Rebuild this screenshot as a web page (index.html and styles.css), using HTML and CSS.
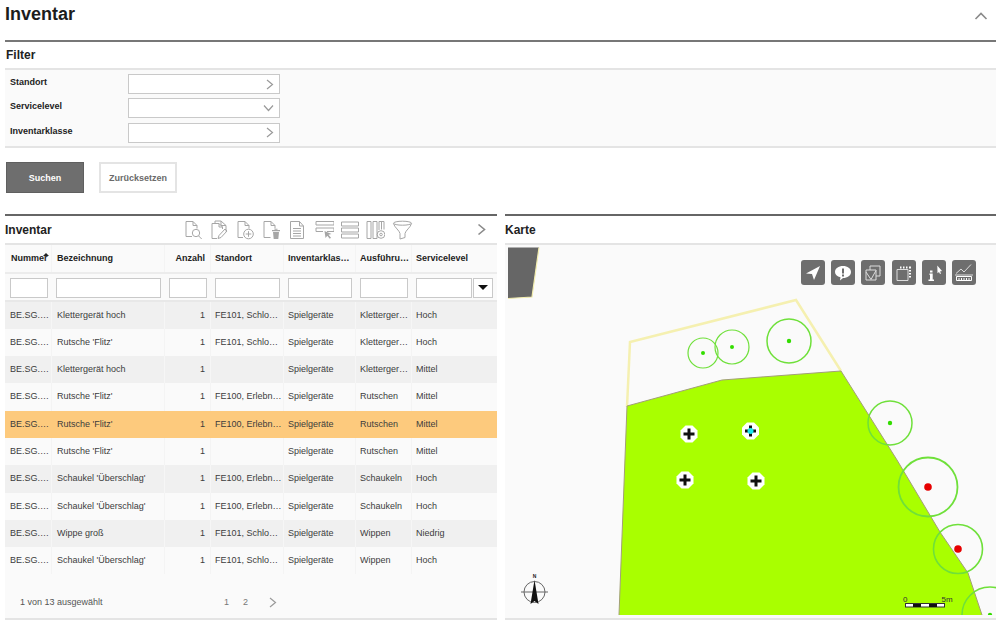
FILE: index.html
```html
<!DOCTYPE html>
<html lang="de">
<head>
<meta charset="utf-8">
<title>Inventar</title>
<link rel="stylesheet" href="styles.css">
</head>
<body>
<div class="page">
  <header class="title-bar">
    <h1>Inventar</h1>
    <svg class="collapse" width="14" height="8" viewBox="0 0 14 8"><path d="M1.5 7 7 1.5 12.5 7" /></svg>
  </header>

  <section class="filter">
    <h2 class="filter-title">Filter</h2>
    <div class="filter-body">
      <div class="filter-row"><label>Standort</label><div class="field"><svg width="8" height="11" viewBox="0 0 8 11"><path d="M1 1l5.5 4.5L1 10"/></svg></div></div>
      <div class="filter-row"><label>Servicelevel</label><div class="field"><svg width="11" height="8" viewBox="0 0 11 8"><path d="M1 1.500l4.500 5 4.500-5"/></svg></div></div>
      <div class="filter-row"><label>Inventarklasse</label><div class="field"><svg width="8" height="11" viewBox="0 0 8 11"><path d="M1 1l5.5 4.5L1 10"/></svg></div></div>
    </div>
    <div class="actions">
      <button class="btn btn-primary">Suchen</button>
      <button class="btn btn-secondary">Zurücksetzen</button>
    </div>
  </section>

  <div class="panels">
    <section class="panel panel-left">
      <div class="panel-head">
        <h2>Inventar</h2>
        <div class="tools">
          <svg width="19" height="20" viewBox="0 0 19 20"><path d="M8 16.500H2V1.500h7l4 4v3M9 1.500v4h4"/><circle cx="12" cy="13" r="3.700"/><path d="M14.500 15.800l3.200 3.200"/></svg>
          <svg width="19" height="20" viewBox="0 0 19 20"><path d="M5 3.500V1h6l5 4.500v6M11 1v4.500h5M7 18.500H2V3.500h7l3.500 3.500v2M9 3.500V7h3.500"/><path d="M8 18.500l1-3 6-6.500 2 2-6 6.500z"/></svg>
          <svg width="19" height="20" viewBox="0 0 19 20"><path d="M7 17.500H2V1.500h7l4 4v3M9 1.500v4h4"/><circle cx="12.500" cy="14" r="4.800"/><path d="M12.500 11.200v5.600M9.700 14h5.600"/></svg>
          <svg width="20" height="20" viewBox="0 0 20 20"><path d="M8.500 17.500H2V1.500h7l4 4v3M9 1.500v4h4"/><path class="solid" d="M10 10h8v1.200h-8zM12.500 8.800h3v1h-3zM11 12h6l-.7 7h-4.600z"/></svg>
          <svg width="19" height="20" viewBox="0 0 19 20"><path d="M1.500 18.500V1.500h9l4 4.500v12.500zM10.500 1.500V6h4M4 8.500h8M4 11h8M4 13.500h8M4 16h8"/></svg>
          <svg width="19" height="20" viewBox="0 0 19 20"><path d="M1 1.500h18v3.500H1zM1 8h18v3.500h-7M8 11.500H1V8"/><path class="solid" d="M9.500 11l7 3-3 .8 2.500 3-1.200 1-2.500-3-1.800 2.200z"/></svg>
          <svg width="18" height="20" viewBox="0 0 18 20"><path d="M.5 2h17v4H.5zM.5 8h17v4H.5zM.5 14h17v4H.5z"/></svg>
          <svg width="19" height="20" viewBox="0 0 19 20"><path d="M1 1.500h4v17H1zM7 1.500h4v17H7zM13 10V1.500h5v8M15.500 1.500v8"/><circle cx="15" cy="14.500" r="3.800"/><circle cx="15" cy="14.500" r="1.300"/></svg>
          <svg width="21" height="20" viewBox="0 0 21 20"><ellipse cx="10.500" cy="3.200" rx="9" ry="2"/><path d="M1.500 3.500c1 4 6 7 6.500 10v5.500l5-1.500v-4c.5-3 5.500-6 6.500-10"/></svg>
        </div>
        <svg class="panel-arrow" width="9" height="13" viewBox="0 0 9 13"><path d="M1.500 1.500l6 5-6 5"/></svg>
      </div>

      <div class="grid">
        <div class="row head">
          <div class="c sorted">Nummer</div><div class="c">Bezeichnung</div><div class="c num">Anzahl</div><div class="c">Standort</div><div class="c">Inventarklassen</div><div class="c">Ausführung</div><div class="c">Servicelevel</div>
        </div>
        <div class="row filters">
          <div class="c"><input></div><div class="c"><input></div><div class="c"><input></div><div class="c"><input></div><div class="c"><input></div><div class="c"><input></div>
          <div class="c with-btn"><input><span class="drop"></span></div>
        </div>
        <div class="row odd"><div class="c">BE.SG.001</div><div class="c">Klettergerät hoch</div><div class="c num">1</div><div class="c">FE101, Schlosspark</div><div class="c">Spielgeräte</div><div class="c">Klettergeräte</div><div class="c">Hoch</div></div>
        <div class="row even"><div class="c">BE.SG.002</div><div class="c">Rutsche 'Flitz'</div><div class="c num">1</div><div class="c">FE101, Schlosspark</div><div class="c">Spielgeräte</div><div class="c">Klettergeräte</div><div class="c">Hoch</div></div>
        <div class="row odd"><div class="c">BE.SG.003</div><div class="c">Klettergerät hoch</div><div class="c num">1</div><div class="c"></div><div class="c">Spielgeräte</div><div class="c">Klettergeräte</div><div class="c">Mittel</div></div>
        <div class="row even"><div class="c">BE.SG.004</div><div class="c">Rutsche 'Flitz'</div><div class="c num">1</div><div class="c">FE100, Erlebnispark</div><div class="c">Spielgeräte</div><div class="c">Rutschen</div><div class="c">Mittel</div></div>
        <div class="row selected"><div class="c">BE.SG.005</div><div class="c">Rutsche 'Flitz'</div><div class="c num">1</div><div class="c">FE100, Erlebnispark</div><div class="c">Spielgeräte</div><div class="c">Rutschen</div><div class="c">Mittel</div></div>
        <div class="row even"><div class="c">BE.SG.006</div><div class="c">Rutsche 'Flitz'</div><div class="c num">1</div><div class="c"></div><div class="c">Spielgeräte</div><div class="c">Rutschen</div><div class="c">Mittel</div></div>
        <div class="row odd"><div class="c">BE.SG.007</div><div class="c">Schaukel 'Überschlag'</div><div class="c num">1</div><div class="c">FE100, Erlebnispark</div><div class="c">Spielgeräte</div><div class="c">Schaukeln</div><div class="c">Hoch</div></div>
        <div class="row even"><div class="c">BE.SG.008</div><div class="c">Schaukel 'Überschlag'</div><div class="c num">1</div><div class="c">FE100, Erlebnispark</div><div class="c">Spielgeräte</div><div class="c">Schaukeln</div><div class="c">Hoch</div></div>
        <div class="row odd"><div class="c">BE.SG.009</div><div class="c">Wippe groß</div><div class="c num">1</div><div class="c">FE101, Schlosspark</div><div class="c">Spielgeräte</div><div class="c">Wippen</div><div class="c">Niedrig</div></div>
        <div class="row even"><div class="c">BE.SG.010</div><div class="c">Schaukel 'Überschlag'</div><div class="c num">1</div><div class="c">FE101, Schlosspark</div><div class="c">Spielgeräte</div><div class="c">Wippen</div><div class="c">Hoch</div></div>
      </div>

      <footer class="pager">
        <span class="count">1 von 13 ausgewählt</span>
        <span class="pages"><span>1</span><span class="p2">2</span>
          <svg width="8" height="11" viewBox="0 0 8 11"><path d="M1 1l5.500 4.500L1 10"/></svg></span>
      </footer>
    </section>

    <section class="panel panel-right">
      <div class="panel-head"><h2>Karte</h2></div>
      <div class="map">
        <svg class="map-svg" width="491" height="370" viewBox="505 245 491 370">
          <path d="M508 247.500H539L532 297 508 298.500Z" fill="#666" />
          <path d="M539 247.500 532 297 508 298.500" fill="none" stroke="#f3eeae" stroke-width="1.200"/>
          <path d="M627 407 630 342 796 300 841 371" fill="none" stroke="#f5f0b0" stroke-width="2.500"/>
          <path d="M627 406 722 380 841 371 897 460 940 532 968 573 982 615H619Z" fill="#a9ff00"/>
          <path d="M619 615 627 406 722 380 841 371 897 460 940 532 968 573 982 615" fill="none" stroke="#a29f78" stroke-width="1"/>
          <g fill="none" stroke="#6fe03a">
            <circle cx="703" cy="353" r="15" stroke-width="1.200"/>
            <circle cx="732" cy="347" r="17" stroke-width="1.200"/>
            <circle cx="789" cy="341" r="22" stroke-width="1.500"/>
            <circle cx="890" cy="423" r="22" stroke-width="1.500"/>
            <circle cx="928" cy="487" r="29.500" stroke-width="1.800"/>
            <circle cx="958" cy="549" r="24.500" stroke-width="1.600"/>
            <circle cx="990" cy="615" r="28" stroke-width="1.600"/>
          </g>
          <g fill="#33dd00">
            <circle cx="703" cy="353" r="2"/><circle cx="732" cy="347" r="2"/><circle cx="789" cy="341" r="2.200"/><circle cx="890" cy="423" r="2.200"/><circle cx="990" cy="615" r="2.200"/>
          </g>
          <g fill="#e60000"><circle cx="928" cy="487" r="3.800"/><circle cx="958" cy="549" r="3.800"/></g>
          <g>
            <g transform="translate(689 434)"><path d="M-3.500-8.500h7l5 5v7l-5 5h-7l-5-5v-7z" fill="#fff"/><path d="M-1.500-5.500h3v4h4v3h-4v4h-3v-4h-4v-3h4z" fill="#111"/></g>
            <g transform="translate(750.500 431)"><path d="M-3.500-8.500h7l5 5v7l-5 5h-7l-5-5v-7z" fill="#fff"/><path d="M-1.500-5.500h3v4h4v3h-4v4h-3v-4h-4v-3h4z" fill="#111"/><circle cy="0" r="3" fill="#18e6ee"/></g>
            <g transform="translate(685 480)"><path d="M-3.500-8.500h7l5 5v7l-5 5h-7l-5-5v-7z" fill="#fff"/><path d="M-1.500-5.500h3v4h4v3h-4v4h-3v-4h-4v-3h4z" fill="#111"/></g>
            <g transform="translate(756 481)"><path d="M-3.500-8.500h7l5 5v7l-5 5h-7l-5-5v-7z" fill="#fff"/><path d="M-1.500-5.500h3v4h4v3h-4v4h-3v-4h-4v-3h4z" fill="#111"/></g>
          </g>
          <g>
            <circle cx="534.500" cy="592" r="10.500" fill="none" stroke="#666" stroke-width="1"/>
            <path d="M521 592h27" stroke="#666" stroke-width="1"/>
            <path d="M534.500 580 538.500 604 534.500 601 530.500 604Z" fill="#111"/>
            <text x="534.500" y="578" class="north">N</text>
          </g>
          <g>
            <rect x="905.500" y="603.500" width="39" height="3.500" fill="#fff" stroke="#333" stroke-width="1"/>
            <rect x="913" y="604" width="8" height="3" fill="#111"/><rect x="929" y="604" width="8" height="3" fill="#111"/>
            <text x="903" y="602" class="scale">0</text><text x="941.500" y="602" class="scale">5m</text>
          </g>
        </svg>
        <div class="map-tools">
          <span class="mt"><svg width="16" height="16" viewBox="0 0 16 16"><path d="M15 1 1 8.500l6 .5 2 6z" fill="#fff"/></svg></span>
          <span class="mt"><svg width="18" height="18" viewBox="0 0 18 18"><path d="M9 2c4.500 0 8 2.500 8 6s-3.500 6-8 6l-3 2.500.5-3.200C3 12.300 1 10.500 1 8c0-3.500 3.500-6 8-6z" fill="#fff"/><path d="M8 4.500h2V9.500H8zM8 10.500h2v2H8z" fill="#6e6e6e"/></svg></span>
          <span class="mt"><svg width="18" height="18" viewBox="0 0 18 18" class="line"><path d="M6 6V2h10v10h-4M2 6h10v10H2zM2 8l5 7.500 5-9"/></svg></span>
          <span class="mt"><svg width="18" height="18" viewBox="0 0 18 18" class="line"><path d="M2 5.500h11v11H2z"/><path class="dots" d="M5 3.500h1.500M8 3.500h1.500M11 3.500h1.500M14 3.500h2M15 6v1.500M15 9v1.500M15 12v1.500"/></svg></span>
          <span class="mt"><svg width="18" height="18" viewBox="0 0 18 18"><path d="M5 6.500h2.500v2H5zM4.500 9.500h3.200v6H9V17H3.500v-1.500h1.500v-4.500h-.5z" fill="#fff"/><path d="M12.300 1.500 17 7l-2 .4 1 2.200-1 .5-1-2.200-1.500 1.400z" fill="#fff"/></svg></span>
          <span class="mt"><svg width="20" height="18" viewBox="0 0 20 18" class="line"><path d="M2 9.500l5-4.500 3 3 7-7.500M1 11h18"/><path class="ruler" d="M2.500 12.500h15v4h-15zM5 14v2.500M7.500 14v2.500M10 14v2.500M12.500 14v2.500M15 14v2.500"/></svg></span>
        </div>
      </div>
    </section>
  </div>
</div>
</body>
</html>
```
FILE: styles.css
```css
* { box-sizing: border-box; }
html, body { margin: 0; padding: 0; background: #fff; }
body { font-family: "Liberation Sans", Arial, sans-serif; color: #222; overflow: hidden; }
.page { width: 1000px; height: 622px; padding: 0 4px 0 5px; }

.title-bar { height: 40px; padding-bottom: 12px; display: flex; align-items: center; justify-content: space-between; }
h1 { margin: 0; font-size: 18px; font-weight: 700; color: #1c1c1c; }
.collapse { margin-right: 8px; margin-top: 4px; }
.collapse path { fill: none; stroke: #8a8a8a; stroke-width: 1.6; }

.filter { border-top: 2px solid #777; height: 174px; }
.filter-title { margin: 0; height: 26px; font-size: 12px; font-weight: 700; line-height: 26px; padding-left: 1px; color: #222; }
.filter-body { background: #fafafa; border-top: 2px solid #e4e4e4; border-bottom: 2px solid #e4e4e4; height: 80px; padding-top: 4px; display: flex; flex-direction: column; gap: 4.3px; }
.filter-row { display: flex; height: 20px; }
.filter-row label { width: 123px; padding-left: 5px; font-size: 9px; font-weight: 700; line-height: 16px; color: #222; }
.field { width: 152px; height: 20px; background: #fff; border: 1px solid #c9c9c9; display: flex; align-items: center; justify-content: flex-end; padding-right: 5px; }
.field path, .pages path { fill: none; stroke: #9a9a9a; stroke-width: 1.2; }
.actions { display: flex; gap: 15px; padding: 14px 0 0 1px; }
.btn { height: 31px; width: 78px; font: 700 9px "Liberation Sans", Arial, sans-serif; padding: 0; }
.btn-primary { background: #6e6e6e; border: 1px solid #5f5f5f; color: #fff; }
.btn-secondary { background: #fff; border: 2px solid #e4e4e4; color: #6a6a6a; }

.panels { display: flex; justify-content: space-between; }
.panel { border-top: 2px solid #666; height: 406px; }
.panel-left { width: 492px; }
.panel-right { width: 491px; }
.panel-head { height: 29px; border-bottom: 2px solid #e4e4e4; display: flex; align-items: center; position: relative; }
.panel-head h2 { margin: 0; font-size: 12px; font-weight: 700; color: #222; }
.panel-left .panel-head h2 { width: 179px; }
.tools { display: flex; gap: 7px; align-items: center; }
.tools path, .tools circle, .tools ellipse { fill: none; stroke: #a6a6a6; stroke-width: 1; }
.tools path.solid { fill: #a6a6a6; stroke: none; }
.panel-arrow { margin-left: auto; margin-right: 11px; }
.panel-arrow path { fill: none; stroke: #8a8a8a; stroke-width: 1.6; }

.grid { display: flex; flex-direction: column; background: #fafafa; }
.row { display: grid; grid-template-columns: 47px 113px 46px 73px 72px 56px 85px; height: 27.3px; font-size: 9px; color: #3c3c3c; }
.c { padding: 0 1px 0 5px; line-height: 27px; white-space: nowrap; overflow: hidden; text-overflow: ellipsis; border-right: 1px solid #f4f4f4; }
.c:last-child { border-right: 0; }
.c:nth-child(n+3) { padding-left: 4px; }
.num { text-align: right; padding-right: 5px; }
.head { height: 29px; background: #fafafa; font-weight: 700; color: #222; border-bottom: 2px solid #ececec; }
.head .c { padding-right: 1px; }
.head .c:first-child { padding-left: 6px; padding-right: 0; }
.head .c:nth-child(2) { padding-left: 5px; }
.head .c:nth-child(n+4) { padding-left: 4px; }
.head .num { padding-right: 5px; }
.sorted { position: relative; }
.sorted::after { content: ""; position: absolute; right: 2px; top: 8px; border: 3px solid transparent; border-top: 0; border-bottom: 3px solid #222; }
.filters { height: 27.5px; border-bottom: 2px solid #e8e8e8; background: #fafafa; }
.filters .c { padding: 3.5px 4px 0; border: 0; line-height: 0; overflow: visible; }
.filters .c:first-child { padding-left: 5px; }
.filters input { width: 100%; height: 20px; background: #fff; border: 1px solid #c9c9c9; padding: 0; display: block; }
.with-btn { display: flex; gap: 1px; padding-right: 5px !important; }
.with-btn input { width: 56px; flex: none; }
.drop { width: 20px; height: 20px; background: #fff; border: 1px solid #c9c9c9; position: relative; flex: none; }
.drop::after { content: ""; position: absolute; left: 4px; top: 6px; border: 5px solid transparent; border-bottom: 0; border-top: 5px solid #111; }
.odd { background: #f0f0f0; }
.even { background: #fafafa; }
.selected { background: #fdca7d; }
.selected .c { border-right-color: #fdca7d; }
.odd .c { border-right-color: #f6f6f6; }

.pager { height: 45.5px; background: #fafafa; border-bottom: 2px solid #e4e4e4; display: flex; align-items: center; font-size: 9px; color: #555; padding-top: 12px; }
.count { padding-left: 15px; width: 219px; }
.pages { display: flex; align-items: center; color: #777; }
.p2 { margin-left: 14px; margin-right: 21px; }

.map { position: relative; height: 375px; background: #fafafa; border-bottom: 2px solid #e4e4e4; }
.map-svg { display: block; }
.north { font: 700 5px "Liberation Sans", Arial, sans-serif; text-anchor: middle; fill: #222; }
.scale { font: 400 8px "Liberation Sans", Arial, sans-serif; fill: #333; }
.map-tools { position: absolute; left: 295.7px; top: 15px; display: flex; gap: 6.3px; }
.mt { width: 24px; height: 25px; background: #6e6e6e; border-radius: 3px; display: flex; align-items: center; justify-content: center; }
.line path { fill: none; stroke: #dcdcdc; stroke-width: 1; }
.line path.dots { stroke-width: 2; stroke: #fff; }
.line path.ruler { stroke: #fff; }
```
